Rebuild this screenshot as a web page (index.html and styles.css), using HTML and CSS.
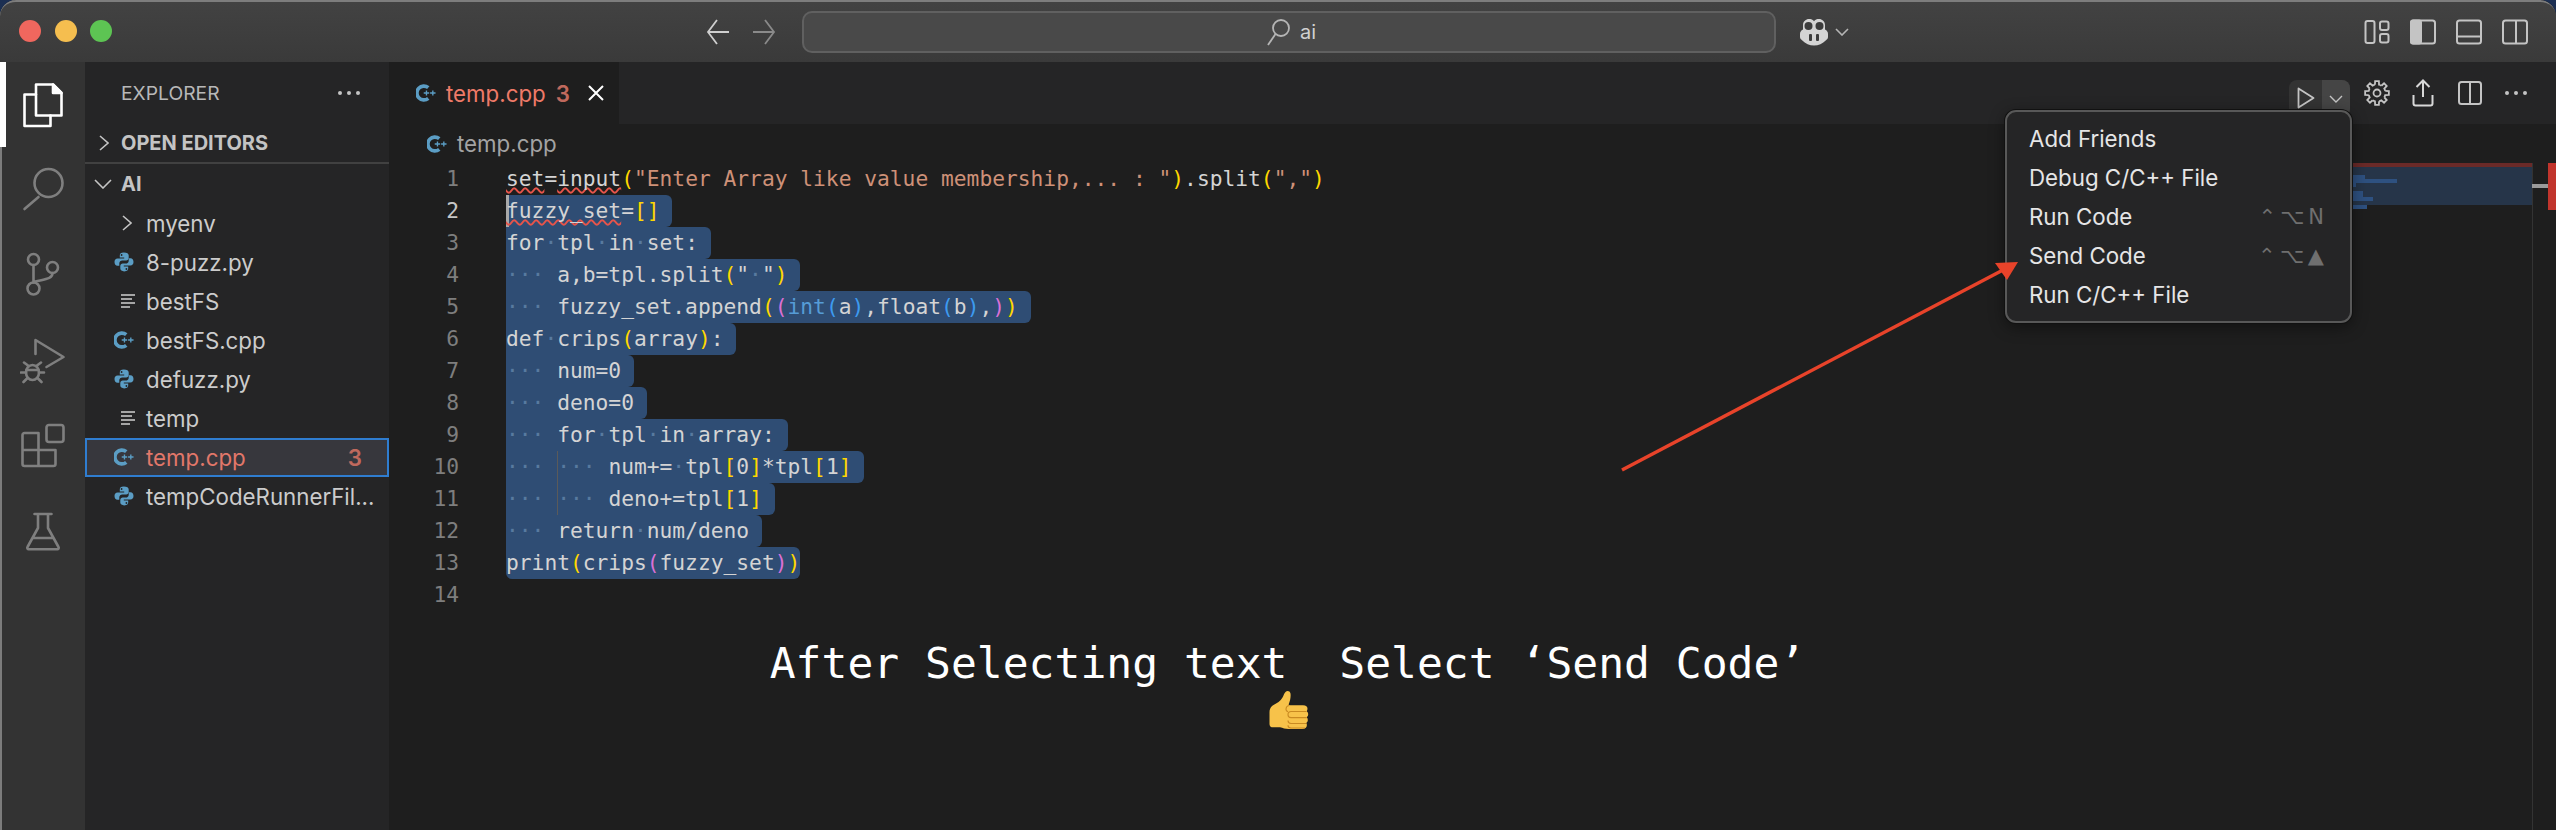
FILE: index.html
```html
<!DOCTYPE html>
<html lang="en">
<head>
<meta charset="utf-8">
<title>temp.cpp - ai</title>
<link rel="stylesheet" href="styles.css">
</head>
<body>
<svg class="defs" width="0" height="0" aria-hidden="true">
  <symbol id="py" viewBox="0 0 20 20">
    <path fill="#5b9dc4" d="M9.8.6C6.7.6 5.8 1.800 5.800 3.400v2.200h4.400v.8H3.600C1.700 6.400.5 7.800.5 10s1.200 3.800 3 3.800h1.800v-2.500c0-1.600 1.300-2.900 3-2.900h3.900c1.400 0 2.500-1.100 2.500-2.500V3.400C14.700 1.700 13 .6 9.800.6zM7.600 2.100a.9.900 0 1 1 0 1.800.9.900 0 0 1 0-1.800z"/>
    <path fill="#5b9dc4" d="M10.200 19.400c3.100 0 4-1.200 4-2.800v-2.200H9.800v-.8h6.600c1.900 0 3.100-1.400 3.100-3.600s-1.200-3.800-3-3.800h-1.800v2.500c0 1.600-1.300 2.900-3 2.900H8.800c-1.400 0-2.500 1.100-2.500 2.500v2.500c0 1.700 1.700 2.800 3.900 2.800zm2.200-1.500a.9.900 0 1 1 0-1.800.9.900 0 0 1 0 1.800z"/>
  </symbol>
  <symbol id="cpp" viewBox="0 0 22 20">
    <path fill="none" stroke="#5b9dc4" stroke-width="4" d="M13.500 4.200A7.600 7.600 0 1 0 13.500 15.800"/>
    <path fill="none" stroke="#5b9dc4" stroke-width="1.500" d="M8.500 10h6M11.500 7.200v5.600M15.500 10h6M18.500 7.200v5.600"/>
  </symbol>
  <symbol id="txt" viewBox="0 0 16 16">
    <path fill="none" stroke="#d0d0d0" stroke-width="1.600" d="M1 2h14M1 6h11M1 10h14M1 14h9"/>
  </symbol>
  <path id="tooth" d="M10.940 4.750 11.120 1.150H14.880L15.060 4.750A8.500 8.500 0 0 1 17.380 5.710"/>
</svg>

<div class="window">
  <header class="titlebar">
    <div class="lights">
      <span class="light red"></span><span class="light yellow"></span><span class="light green"></span>
    </div>
    <div class="nav">
      <svg class="nav-arrow" viewBox="0 0 24 28"><path d="M23 14H2M11 2 2 14l9 12"/></svg>
      <svg class="nav-arrow dim" viewBox="0 0 24 28"><path d="M1 14h21M13 2l9 12-9 12"/></svg>
    </div>
    <div class="search">
      <svg class="search-icon" viewBox="0 0 24 28"><circle cx="15" cy="10" r="8"/><path d="M9.500 16 2 27"/></svg>
      <span class="search-text">ai</span>
    </div>
    <div class="copilot">
      <svg class="copilot-icon" viewBox="0 0 30 28">
        <path fill="#d4d4d4" d="M1 16c0-2 1-3.500 3-4.500V7c0-3.500 3-6 6-6 2 0 4 .6 5 2.200C16 1.600 18 1 20 1c3 0 6 2.500 6 6v4.500c2 1 3 2.500 3 4.500v3c0 1.500-1 2.500-2 3.200C23.500 25.800 19.500 27.500 15 27.500S6.500 25.800 3 22.200C2 21.500 1 20.500 1 19z"/>
        <circle cx="9.500" cy="8" r="4" fill="#3c3c3c"/><circle cx="20.500" cy="8" r="4" fill="#3c3c3c"/>
        <rect x="10" y="16" width="3" height="7" rx="1" fill="#3c3c3c"/><rect x="17" y="16" width="3" height="7" rx="1" fill="#3c3c3c"/>
      </svg>
      <svg class="chev-small" viewBox="0 0 14 8"><path d="M1 1l6 6 6-6"/></svg>
    </div>
    <div class="layout-icons">
      <svg class="layout-icon" viewBox="0 0 26 26"><rect x="1.500" y="2" width="9" height="22" rx="2"/><rect x="16" y="2.500" width="8.500" height="8.500" rx="2"/><rect x="16" y="15" width="8.500" height="8.500" rx="2"/></svg>
      <svg class="layout-icon" viewBox="0 0 26 26"><rect x="1" y="1.500" width="24" height="23" rx="2.500"/><rect class="fill" x="1" y="1.500" width="10" height="23" rx="2"/></svg>
      <svg class="layout-icon" viewBox="0 0 26 26"><rect x="1" y="1.500" width="24" height="23" rx="2.500"/><path d="M1 17.500h24"/></svg>
      <svg class="layout-icon" viewBox="0 0 26 26"><rect x="1" y="1.500" width="24" height="23" rx="2.500"/><path d="M14 1.500v23"/></svg>
    </div>
  </header>

  <div class="workbench">
    <nav class="activity">
      <span class="activity-mark"></span>
      <div class="activity-slot">
        <svg class="act-icon active" viewBox="0 0 48 48"><path d="M16 3.500h17l8.500 8.500v22.500H16z"/><path class="solid" d="M33 3.500l8.500 8.500H33z"/><path d="M16 13.500H4.500V45h26V34.500"/></svg>
      </div>
      <div class="activity-slot">
        <svg class="act-icon" viewBox="0 0 48 48"><circle cx="28.500" cy="17" r="14"/><path d="M4.500 43l14-12"/></svg>
      </div>
      <div class="activity-slot">
        <svg class="act-icon" viewBox="0 0 48 48"><circle cx="13.500" cy="8.500" r="5.500"/><circle cx="13.500" cy="37.500" r="6"/><circle cx="32.500" cy="16.500" r="5.500"/><path d="M13.500 14v17.500M32.500 22c0 6-7 6-19 9"/></svg>
      </div>
      <div class="activity-slot">
        <svg class="act-icon" viewBox="0 0 48 48"><path d="M15.500 17V3l28 17-17 10"/><ellipse cx="12.500" cy="35.500" rx="6.500" ry="7.500"/><path d="M8 28.500l-4-3M17 28.500l4-3M6 35.500H1M19 35.500h5M7.500 41l-4 4M17.500 41l4 4M6.500 33h12"/></svg>
      </div>
      <div class="activity-slot">
        <svg class="act-icon" viewBox="0 0 48 48"><rect x="26.500" y="3" width="17" height="17" rx="2.500"/><path d="M2.500 13a2 2 0 0 1 2-2h14v17h17v14a2 2 0 0 1-2 2h-29a2 2 0 0 1-2-2zM2.500 28h16v16"/></svg>
      </div>
      <div class="activity-slot">
        <svg class="act-icon" viewBox="0 0 48 48"><path d="M14.500 6h17M18 6v14L7.500 39a1.500 1.500 0 0 0 1.300 2.300h28.400a1.500 1.500 0 0 0 1.300-2.300L28 20V6M13 30h20"/></svg>
      </div>
    </nav>

    <aside class="sidebar">
      <div class="side-title"><span>EXPLORER</span><span class="dots"><i></i><i></i><i></i></span></div>
      <div class="section closed">
        <svg class="chev-right" viewBox="0 0 10 16"><path d="M1 1l8 7-8 7"/></svg>
        <span>OPEN EDITORS</span>
      </div>
      <div class="section open">
        <svg class="chev-down" viewBox="0 0 18 10"><path d="M1 1l8 8 8-8"/></svg>
        <span>AI</span>
      </div>
      <ul class="tree">
        <li class="row"><span class="slot"><svg class="chev-right" viewBox="0 0 10 16"><path d="M1 1l8 7-8 7"/></svg></span><span class="name">myenv</span></li>
        <li class="row"><span class="slot"><svg class="file-icon"><use href="#py"/></svg></span><span class="name">8-puzz.py</span></li>
        <li class="row"><span class="slot"><svg class="file-icon txt"><use href="#txt"/></svg></span><span class="name">bestFS</span></li>
        <li class="row"><span class="slot"><svg class="file-icon"><use href="#cpp"/></svg></span><span class="name">bestFS.cpp</span></li>
        <li class="row"><span class="slot"><svg class="file-icon"><use href="#py"/></svg></span><span class="name">defuzz.py</span></li>
        <li class="row"><span class="slot"><svg class="file-icon txt"><use href="#txt"/></svg></span><span class="name">temp</span></li>
        <li class="row selected"><span class="slot"><svg class="file-icon"><use href="#cpp"/></svg></span><span class="name">temp.cpp</span><span class="count">3</span></li>
        <li class="row"><span class="slot"><svg class="file-icon"><use href="#py"/></svg></span><span class="name">tempCodeRunnerFil...</span></li>
      </ul>
    </aside>

    <main class="editor">
      <div class="tabs">
        <div class="tab">
          <svg class="file-icon"><use href="#cpp"/></svg>
          <span class="tab-name">temp.cpp</span>
          <span class="tab-count">3</span>
          <svg class="tab-close" viewBox="0 0 16 16"><path d="M1 1l14 14M15 1 1 15"/></svg>
        </div>
        <div class="actions">
          <div class="run">
            <span class="run-play"><svg class="tool" viewBox="0 0 18 22"><path d="M1.500 1.500 16.500 11 1.500 20.500z"/></svg></span>
            <span class="run-more"><svg class="tool-chev" viewBox="0 0 14 8"><path d="M1 1l6 6 6-6"/></svg></span>
          </div>
          <svg class="gear" viewBox="0 0 26 26">
            <use href="#tooth"/>
            <use href="#tooth" transform="rotate(45 13 13)"/>
            <use href="#tooth" transform="rotate(90 13 13)"/>
            <use href="#tooth" transform="rotate(135 13 13)"/>
            <use href="#tooth" transform="rotate(180 13 13)"/>
            <use href="#tooth" transform="rotate(225 13 13)"/>
            <use href="#tooth" transform="rotate(270 13 13)"/>
            <use href="#tooth" transform="rotate(315 13 13)"/>
            <circle cx="13" cy="13" r="3.500"/>
          </svg>
          <svg class="share" viewBox="0 0 22 28"><path d="M11 18V2M4.500 8 11 1.500 17.500 8M1.500 16v8.500a2 2 0 0 0 2 2h15a2 2 0 0 0 2-2V16"/></svg>
          <svg class="split" viewBox="0 0 24 24"><rect x="1" y="1" width="22" height="22" rx="2.500"/><path d="M12 1v22"/></svg>
          <span class="dots"><i></i><i></i><i></i></span>
        </div>
      </div>
      <div class="crumbs">
        <svg class="file-icon"><use href="#cpp"/></svg>
        <span>temp.cpp</span>
      </div>
      <div class="edit-body">
        <div class="code">
          <div class="line"><span class="num">1</span><span class="txt"><span class="sq">set</span>=<span class="sq">input</span><b class="y">(</b><span class="str">"Enter Array like value membership,... : "</span><b class="y">)</b>.split<b class="y">(</b><span class="str">","</span><b class="y">)</b></span></div>
          <div class="line now"><span class="num">2</span><span class="txt sel cursor eol"><span class="sq">fuzzy_set</span>=<b class="y">[]</b></span></div>
          <div class="line"><span class="num">3</span><span class="txt sel eol">for<i class="ws">·</i>tpl<i class="ws">·</i>in<i class="ws">·</i>set:</span></div>
          <div class="line"><span class="num">4</span><span class="txt sel eol"><i class="ws">··· </i>a,b=tpl.split<b class="y">(</b>"<i class="ws">·</i>"<b class="y">)</b></span></div>
          <div class="line"><span class="num">5</span><span class="txt sel eol"><i class="ws">··· </i>fuzzy_set.append<b class="y">(</b><b class="p">(</b><span class="kw">int</span><b class="b">(</b>a<b class="b">)</b>,float<b class="b">(</b>b<b class="b">)</b>,<b class="p">)</b><b class="y">)</b></span></div>
          <div class="line"><span class="num">6</span><span class="txt sel eol">def<i class="ws">·</i>crips<b class="y">(</b>array<b class="y">)</b>:</span></div>
          <div class="line"><span class="num">7</span><span class="txt sel eol"><i class="ws">··· </i>num=0</span></div>
          <div class="line"><span class="num">8</span><span class="txt sel eol"><i class="ws">··· </i>deno=0</span></div>
          <div class="line"><span class="num">9</span><span class="txt sel eol"><i class="ws">··· </i>for<i class="ws">·</i>tpl<i class="ws">·</i>in<i class="ws">·</i>array:</span></div>
          <div class="line"><span class="num">10</span><span class="txt sel eol"><i class="ws">··· </i><i class="ws guide">··· </i>num+=<i class="ws">·</i>tpl<b class="y">[</b>0<b class="y">]</b>*tpl<b class="y">[</b>1<b class="y">]</b></span></div>
          <div class="line"><span class="num">11</span><span class="txt sel eol"><i class="ws">··· </i><i class="ws guide">··· </i>deno+=tpl<b class="y">[</b>1<b class="y">]</b></span></div>
          <div class="line"><span class="num">12</span><span class="txt sel eol"><i class="ws">··· </i>return<i class="ws">·</i>num/deno</span></div>
          <div class="line"><span class="num">13</span><span class="txt sel last">print<b class="y">(</b>crips<b class="p">(</b>fuzzy_set<b class="p">)</b><b class="y">)</b></span></div>
          <div class="line"><span class="num">14</span></div>
        </div>
        <div class="minimap">
          <div class="mini-error"></div>
          <div class="mini-sel">
            <span class="mm m1"></span><span class="mm m2"></span><span class="mm m3"></span><span class="mm m4"></span><span class="mm m5"></span><span class="mm m6"></span>
          </div>
        </div>
        <div class="ruler"><span class="ruler-line"></span><span class="ruler-error"></span></div>
      </div>
    </main>
  </div>

  <div class="menu">
    <div class="menu-item"><span>Add Friends</span></div>
    <div class="menu-item"><span>Debug C/C++ File</span></div>
    <div class="menu-item"><span>Run Code</span><span class="keys">⌃⌥N</span></div>
    <div class="menu-item"><span>Send Code</span><span class="keys">⌃⌥▲</span></div>
    <div class="menu-item"><span>Run C/C++ File</span></div>
  </div>

  <svg class="arrow" viewBox="0 0 400 212"><path class="shaft" d="M1 210 382 10"/><path class="head" d="M397 2 374 3 386 20z"/></svg>

  <div class="caption">
    <span>After Selecting text  Select ‘Send Code’</span>
    <svg class="thumb" viewBox="0 0 40 43" role="img" aria-label="thumbs up">
      <path fill="#f7c24a" d="M16.500 2C18 .3 21 .8 21.500 3.500 22 7 21 11 19.800 14c-.3.700 0 1.300.8 1.300H34c3 0 4.500 1.500 4.500 3.500 0 1-.3 1.800-.8 2.500 1 .8 1.500 1.800 1.500 3 0 1.200-.5 2.200-1.400 3 .7.700 1 1.600 1 2.600 0 1.300-.6 2.400-1.600 3 .5.700.7 1.400.7 2.200 0 2.500-2 4-5 4H20c-4 0-6-1.200-9-1.800H3.500C1.800 37.300.5 36 .5 34V22c0-3 1.500-5.800 4-7 3.500-1.700 7-4 9-7.500 1-1.700 1.500-3.800 3-5.500z"/>
      <path fill="none" stroke="#c98a22" stroke-width="1.100" d="M20 15.500c-2.500.500-3 2-3 4 0 1 .8 1.800 2 2.100M37.500 21.500H22c-2 0-3 1.500-3 3.200s1 2.900 3 2.900h15.800M37.200 33.500H22c-2 0-3-1.200-3-2.900M36 38H22c-1.800 0-3-1-3-2.700"/>
    </svg>
  </div>
</div>
</body>
</html>
```

FILE: styles.css
```css
* { box-sizing: border-box; }
html, body { margin: 0; height: 830px; overflow: hidden; background: #1c2f52; }
.defs { position: absolute; }
svg { display: block; flex: none; }
i, b { font-style: normal; font-weight: inherit; }
ul { list-style: none; margin: 0; padding: 0; }

.window {
  position: relative;
  width: 2556px;
  height: 830px;
  display: flex;
  flex-direction: column;
  border-top-left-radius: 16px;
  border-top-right-radius: 16px;
  overflow: hidden;
  background: #1e1e1e;
  box-shadow: inset 2px 0 #7c7c7c;
  font-family: Inter, "Liberation Sans", sans-serif;
  color: #cccccc;
}

/* Title bar */
.titlebar {
  height: 62px;
  flex: none;
  display: flex;
  align-items: center;
  padding-left: 19px;
  background: linear-gradient(#424242, #3a3a3a);
  border-top: 2px solid #7d7d7d;
  border-radius: 16px 16px 0 0;
}
.lights { display: flex; gap: 13.500px; margin-top: -2px; }
.light { width: 22px; height: 22px; border-radius: 50%; }
.red { background: #f0675e; }
.yellow { background: #f5be4f; }
.green { background: #5dc453; }
.nav { display: flex; gap: 22px; margin-left: 594px; }
.nav-arrow { width: 24px; height: 28px; fill: none; stroke: #cfcfcf; stroke-width: 1.800; }
.nav-arrow.dim { stroke: #8a8a8a; }
.search {
  width: 974px;
  height: 42px;
  margin-left: 26px;
  padding-left: 4px;
  display: flex;
  align-items: center;
  justify-content: center;
  gap: 10px;
  background: #494949;
  border: 2px solid #606060;
  border-radius: 10px;
}
.search-icon { width: 24px; height: 28px; fill: none; stroke: #b5b5b5; stroke-width: 1.800; }
.search-text { font-size: 20px; color: #d0d0d0; }
.copilot { display: flex; align-items: center; gap: 6px; margin-left: 23px; }
.copilot-icon { width: 30px; height: 28px; }
.chev-small { width: 14px; height: 8px; fill: none; stroke: #b5b5b5; stroke-width: 1.600; }
.layout-icons { display: flex; gap: 20px; margin-left: auto; padding-right: 28px; }
.layout-icon { width: 26px; height: 26px; fill: none; stroke: #c4c4c4; stroke-width: 2; }
.layout-icon .fill { fill: #c4c4c4; }

/* Workbench */
.workbench { flex: 1; display: flex; min-height: 0; }

.activity {
  position: relative;
  width: 83px;
  margin-left: 2px;
  flex: none;
  background: #333333;
}
.activity-mark { position: absolute; left: -2px; top: 0; width: 6px; height: 85px; background: #ffffff; }
.activity-slot { height: 85.400px; display: flex; align-items: center; justify-content: center; }
.act-icon { width: 48px; height: 48px; fill: none; stroke: #7f7f7f; stroke-width: 2.600; stroke-linejoin: round; stroke-linecap: round; }
.act-icon.active { stroke: #ffffff; }
.act-icon .solid { fill: #ffffff; }

.sidebar { width: 304px; flex: none; background: #252526; }
.side-title {
  height: 62px;
  display: flex;
  align-items: center;
  justify-content: space-between;
  padding: 0 29px 0 36px;
  font-size: 19.300px;
  color: #b8b8b8;
}
.dots { display: flex; gap: 5px; }
.dots i { width: 4px; height: 4px; border-radius: 50%; background: #c4c4c4; }
.section {
  display: flex;
  align-items: center;
  font-size: 20px;
  font-weight: 700;
  color: #c4c4c4;
}
.section.closed { height: 40px; padding-left: 14px; gap: 12px; border-bottom: 2px solid #414141; }
.section.open { height: 39.500px; padding-left: 9px; gap: 9px; }
.chev-right { width: 10px; height: 16px; fill: none; stroke: #c4c4c4; stroke-width: 1.600; }
.chev-down { width: 18px; height: 10px; fill: none; stroke: #c4c4c4; stroke-width: 1.600; }

.row { height: 39px; display: flex; align-items: center; font-size: 22.300px; color: #cccccc; padding-right: 13px; }
.slot { width: 61px; flex: none; display: flex; padding-left: 29px; }
.slot .chev-right { margin-left: 8px; }
.slot .txt { margin-left: 6px; }
.file-icon { width: 20px; height: 20px; }
.file-icon.txt { width: 16px; height: 16px; }
.row.selected { background: #37373d; box-shadow: inset 0 0 0 2px #2f7dd0; color: #e2776a; }
.count { margin-left: auto; margin-right: 14px; font-weight: 600; color: #c0695d; }

/* Editor */
.editor { flex: 1; min-width: 0; display: flex; flex-direction: column; }
.tabs { height: 62px; flex: none; display: flex; background: #252526; }
.tab {
  width: 230px;
  display: flex;
  align-items: center;
  padding-left: 27px;
  background: #1e1e1e;
  font-size: 22.300px;
}
.tab-name { margin-left: 10px; color: #ee7a68; }
.tab-count { margin-left: 10px; font-weight: 600; color: #c0695d; }
.tab-close { width: 16px; height: 16px; margin-left: 18px; fill: none; stroke: #ffffff; stroke-width: 2; }
.actions { margin-left: auto; display: flex; align-items: center; padding: 0 29px 0 0; }
.run { display: flex; width: 61px; height: 37px; margin-top: 11px; border-radius: 8px; overflow: hidden; background: #333333; }
.run-play { width: 33px; display: flex; align-items: center; justify-content: center; }
.run-more { flex: 1; display: flex; align-items: center; justify-content: center; background: #454545; }
.tool { width: 18px; height: 22px; fill: none; stroke: #c4c4c4; stroke-width: 1.800; stroke-linejoin: round; margin-top: -1px; }
.tool-chev { width: 14px; height: 8px; fill: none; stroke: #c4c4c4; stroke-width: 1.400; }
.gear { width: 26px; height: 26px; margin-left: 14px; fill: none; stroke: #c4c4c4; stroke-width: 1.800; }
.share { width: 22px; height: 28px; margin-left: 22px; fill: none; stroke: #d8d8d8; stroke-width: 2; }
.split { width: 24px; height: 24px; margin-left: 24px; fill: none; stroke: #c4c4c4; stroke-width: 2; }
.actions .dots { margin-left: 23px; }

.crumbs {
  height: 39px;
  flex: none;
  display: flex;
  align-items: center;
  gap: 10px;
  padding-left: 38px;
  font-size: 22.300px;
  color: #a3a3a3;
}

.edit-body { flex: 1; display: flex; min-height: 0; }
.code {
  flex: 1;
  font-family: "DejaVu Sans Mono", "Liberation Mono", monospace;
  font-size: 21.260px;
  line-height: 32px;
  color: #d4d4d4;
}
.line { height: 32px; display: flex; white-space: pre; }
.num { width: 70px; flex: none; text-align: right; color: #7e7e7e; margin-right: 47px; }
.now .num { color: #c6c6c6; }
.txt { display: block; }
.sel { background: #2f4d74; border-radius: 0 6px 6px 0; }
.eol { padding-right: 1ch; }
.last { border-radius: 0 6px 6px 6px; }
.cursor { box-shadow: inset 3px 0 #a9a9a9; }
.sq { text-decoration: underline wavy #e8544a 2px; text-underline-offset: 1px; text-decoration-skip-ink: none; }
.str { color: #ce9178; }
.kw { color: #569cd6; }
.y { color: #ffd700; }
.p { color: #da70d6; }
.b { color: #3d9bf0; }
.ws { color: #587a9f; }
.guide { display: inline-block; height: 32px; vertical-align: top; box-shadow: inset 1px 0 #5a5a5a; }

.minimap { width: 179px; flex: none; }
.mini-error { height: 4px; background: #6a2a28; }
.mini-sel { position: relative; height: 38px; background: #263549; }
.mm { position: absolute; left: 0; height: 4px; background: #2e5180; }
.m1 { top: 8px; width: 12px; }
.m2 { top: 12px; width: 44px; }
.m3 { top: 16px; width: 3px; }
.m4 { top: 24px; width: 10px; height: 6px; }
.m5 { top: 30px; width: 20px; }
.m6 { top: 38px; width: 14px; }
.ruler { position: relative; width: 24px; flex: none; box-shadow: inset 1px 0 #333333; }
.ruler-line { position: absolute; left: 0; right: 0; top: 21px; height: 4px; background: #9a9a9a; }
.ruler-error { position: absolute; right: 0; top: 0; width: 8px; height: 47px; background: #c1342c; }

/* Overlays */
.menu {
  position: absolute;
  left: 2005px;
  top: 110px;
  width: 347px;
  height: 213px;
  padding: 7px 26px 0 22px;
  background: #252526;
  border: 2px solid #585858;
  border-radius: 11px;
  box-shadow: 0 0 0 1px #111111, 0 4px 16px rgba(0, 0, 0, .45);
  font-size: 22.300px;
  color: #e6e6e6;
}
.menu-item { height: 39px; display: flex; align-items: center; justify-content: space-between; }
.keys { font-family: "DejaVu Sans", sans-serif; font-size: 21px; letter-spacing: 4px; margin-right: -4px; color: #6f6f6f; }

.arrow { position: absolute; left: 1621px; top: 260px; width: 400px; height: 212px; }
.shaft { fill: none; stroke: #e8432a; stroke-width: 3.500; }
.head { fill: #e8432a; }

.caption {
  position: absolute;
  left: 771px;
  top: 638px;
  width: 1033px;
  display: flex;
  flex-direction: column;
  align-items: center;
  font-family: "DejaVu Sans Mono", "Liberation Mono", monospace;
  font-size: 43px;
  line-height: 50px;
  white-space: pre;
  color: #ffffff;
}
.thumb { width: 40px; height: 43px; margin-top: 2px; margin-left: 3px; }
```
